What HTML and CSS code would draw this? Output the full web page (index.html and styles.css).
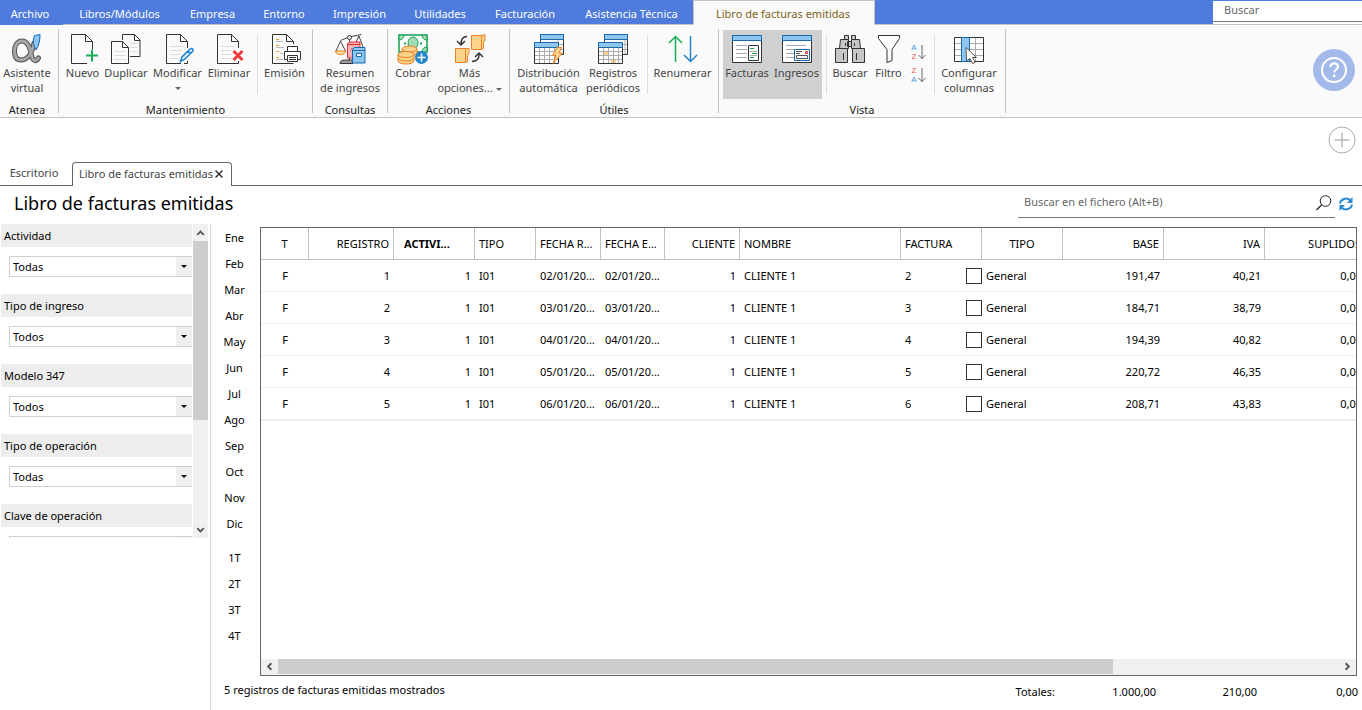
FILE: index.html
```html
<!DOCTYPE html>
<html lang="es">
<head>
<meta charset="utf-8">
<title>Libro de facturas emitidas</title>
<link rel="stylesheet" href="styles.css">
</head>
<body>
<header class="topbar">
  <nav class="menu">
    <button class="menu-item menu-file">Archivo</button>
    <button class="menu-item">Libros/Módulos</button>
    <button class="menu-item">Empresa</button>
    <button class="menu-item">Entorno</button>
    <button class="menu-item">Impresión</button>
    <button class="menu-item">Utilidades</button>
    <button class="menu-item">Facturación</button>
    <button class="menu-item">Asistencia Técnica</button>
    <button class="menu-item menu-active">Libro de facturas emitidas</button>
  </nav>
  <div class="top-search"><input type="text" placeholder="Buscar" aria-label="Buscar"></div>
</header>

<section class="ribbon">
  <div class="group g-atenea">
    <div class="tools">
      <button class="tool">
        <svg viewBox="0 0 32 32"><g fill="none" stroke-linecap="round"><path d="M23 10C21 21 16 27 10 27 5 27 3.500 23 3.500 18S6 8 11 8c6 0 8 7 9.500 14 1 5 3.500 8 7 3" stroke="#555" stroke-width="5"/><path d="M23 10C21 21 16 27 10 27 5 27 3.500 23 3.500 18S6 8 11 8c6 0 8 7 9.500 14 1 5 3.500 8 7 3" stroke="#a6a6a6" stroke-width="3"/></g><path d="M23.500 2.500l5.500-1c0 6-1 11-4 15.500-2-4-4-8-1.500-14.500z" fill="#8ec6ef" stroke="#1769b0"/></svg>
        <span>Asistente<br>virtual</span>
      </button>
    </div>
    <div class="group-name">Atenea</div>
  </div>

  <div class="group g-mant">
    <div class="tools">
      <button class="tool">
        <svg viewBox="0 0 32 32"><path d="M20 30.500H4.500v-29h14l7 7V16M18.500 1.500v7h7" fill="none" stroke="#333"/><path d="M25 16.500v12M19 22.500h12" stroke="#1aae54" stroke-width="2"/></svg>
        <span>Nuevo</span>
      </button>
      <button class="tool">
        <svg viewBox="0 0 32 32"><path d="M12.500 7V1.500h12l5.500 5.500v16.500H20M24.500 1.500v6H30M12.500 30.500h-11v-22h11l6 6v16h-6M12.500 8.500v6h6" fill="none" stroke="#333"/><path d="M20 10.500h8M20 14.500h8M20 18.500h8M4 18.500h12M4 22.500h12M4 26.500h12" stroke="#ddd"/></svg>
        <span>Duplicar</span>
      </button>
      <button class="tool">
        <svg viewBox="0 0 32 32"><path d="M19 30.500H4.500v-29h14l7 7V15M18.500 1.500v7h7M25.500 28v2.500H22" fill="none" stroke="#333"/><path d="M8 13.500h14M8 17.500h12M8 21.500h10M8 25.500h8" stroke="#ddd"/><path d="M18.500 28.500l1.500-4.500 8-8c2-1.500 4 .5 2.500 2.500l-8 8zM26 18l2.500 2.500" fill="#d9edfb" stroke="#2181cc" stroke-width="1.500"/></svg>
        <span>Modificar</span><i class="caret caret-below"></i>
      </button>
      <button class="tool">
        <svg viewBox="0 0 32 32"><path d="M24 30.500H4.500v-29h14l7 7V15M18.500 1.500v7h7M25.500 28v2.500H24" fill="none" stroke="#333"/><path d="M8 13.500h14M8 17.500h10M8 21.500h10M8 25.500h10" stroke="#ddd"/><path d="M20.500 18l9 9M29.500 18l-9 9" stroke="#ef3b3b" stroke-width="3"/></svg>
        <span>Eliminar</span>
      </button>
      <i class="sep"></i>
      <button class="tool">
        <svg viewBox="0 0 32 32"><path d="M24.500 30.500h-21v-29h14l7 7V11M17.500 1.500v7h7" fill="none" stroke="#333"/><path d="M7 6.500h3M7 12.500h3M7 18.500h3M7 24.500h3" stroke="#f0a020"/><path d="M7 8.500h7M7 14.500h8M11 20.500h3M7 26.500h7" stroke="#bbb"/><path d="M18.500 18.500v-5h10v5M18.500 26.500h-3v-8h16v8h-3M18.500 22.500h10v6h-10zM20 24.500h7M20 26.500h7" fill="#fff" stroke="#333"/></svg>
        <span>Emisión</span>
      </button>
    </div>
    <div class="group-name">Mantenimiento</div>
  </div>

  <div class="group g-cons">
    <div class="tools">
      <button class="tool">
        <svg viewBox="0 0 32 32"><path d="M6.500 7.500L15 4l12.500-2.500M15.500 4v23M6.500 8L2 18M6.500 8l5 10M25 3l4 11M25 3l-3 6" fill="none" stroke="#444"/><circle cx="15.500" cy="4.500" r="2" fill="#fff" stroke="#333"/><path d="M1.500 18h10c-.5 5-9.500 5-10 0z" fill="#fbd99b" stroke="#e8822a"/><path d="M6 30.500c0-3 3-3.500 7-3.500h6v3.500z" fill="#9c9c9c" stroke="#333"/><path d="M13.500 10.500l2-1.500h10.500v16H13.500z" fill="#f6b3b6" stroke="#e22e36"/><path d="M13.500 11.500H26M17 16h5" stroke="#e22e36"/><path d="M18.500 16.500l2-2h10.500v15.500H18.500z" fill="#8ec6ef" stroke="#1769b0"/><path d="M18.500 17.500H31M22.500 20.500h5v3h-5z" fill="#fff" stroke="#1769b0"/></svg>
        <span>Resumen<br>de ingresos</span>
      </button>
    </div>
    <div class="group-name">Consultas</div>
  </div>

  <div class="group g-acc">
    <div class="tools">
      <button class="tool">
        <svg viewBox="0 0 32 32"><path d="M2 2h28v17H2z" fill="#fff" stroke="#11a050" stroke-width="1.500"/><path d="M2 2h5c0 3-2 5-5 5zM30 2h-5c0 3 2 5 5 5zM30 19h-5c0-3 2-5 5-5z" fill="#a3dcb4" stroke="#11a050"/><ellipse cx="16" cy="10" rx="5" ry="6" fill="#a3dcb4" stroke="#11a050"/><path d="M7 9.500h2v2H7zM23 9.500h2v2h-2z" fill="#11a050"/><g fill="#fbd38a" stroke="#e8822a"><path d="M5 16v4c1 4 14 4 15 0v-4z"/><ellipse cx="12.500" cy="16" rx="7.500" ry="3"/><path d="M1 21v7c1 4 15 4 16 0v-7z"/><ellipse cx="9" cy="21.500" rx="8" ry="3"/><path d="M1 25c1 4 15 4 16 0" fill="none"/></g><circle cx="24.500" cy="24.500" r="6.500" fill="#2485cc"/><path d="M24.500 20.500v8M20.500 24.500h8" stroke="#fff" stroke-width="1.500"/></svg>
        <span>Cobrar</span>
      </button>
      <button class="tool">
        <svg viewBox="0 0 32 32"><g fill="#fbd38a" stroke="#e8822a"><path d="M17.500 2.500h10v14h-10zM27.500 2.500l3.500-1v6l-1.500 2v6l-2 1zM1.500 15.500h10v14h-10zM11.500 15.500h3.500v5l-1.500 2v6l-2 1z"/></g><path d="M13 3.500c-4 0-6 3-6 8M3 8l4 4 4-4M18 28.500c5 0 7-2 7-7M21 24l4-4 4 4" fill="none" stroke="#333" stroke-width="1.500"/></svg>
        <span>Más<br>opciones... <i class="caret caret-inline"></i></span>
      </button>
    </div>
    <div class="group-name">Acciones</div>
  </div>

  <div class="group g-util">
    <div class="tools">
      <button class="tool">
        <svg viewBox="0 0 32 32"><path d="M7.500 1.500h23v20h-23z" fill="#fff" stroke="#333"/><path d="M25 6v15M8 11.500h22M8 16.500h22" stroke="#aaa"/><path d="M7.500 1.500h23v5h-23z" fill="#8ec6ef" stroke="#1769b0"/><path d="M1.500 9.500h24v21h-24z" fill="#fff" stroke="#333"/><path d="M2 18.500h23M2 22.500h23M2 26.500h23M6.500 15v15M11.500 15v15M16.500 15v15M21.500 15v15" stroke="#aaa"/><path d="M1.500 9.500h24v5h-24z" fill="#8ec6ef" stroke="#1769b0"/><path d="M24 14.500h4.500L26 20h3.500L20 30.500l3-8h-3.500z" fill="#fbd38a" stroke="#e8822a"/></svg>
        <span>Distribución<br>automática</span>
      </button>
      <button class="tool">
        <svg viewBox="0 0 32 32"><path d="M7.500 1.500h23v20h-23z" fill="#fff" stroke="#333"/><path d="M28 6v15M8 11.500h22M8 16.500h22" stroke="#aaa"/><path d="M7.500 1.500h23v5h-23z" fill="#8ec6ef" stroke="#1769b0"/><path d="M1.500 9.500h24v21h-24z" fill="#fff" stroke="#333"/><path d="M7 19h5v3H7zM14 27h5v3h-5z" fill="#fbd38a"/><path d="M2 18.500h23M2 22.500h23M2 26.500h23M6.500 15v15M11.500 15v15M16.500 15v15M21.500 15v15" stroke="#aaa"/><path d="M1.500 9.500h24v5h-24z" fill="#8ec6ef" stroke="#1769b0"/></svg>
        <span>Registros<br>periódicos</span>
      </button>
      <i class="sep"></i>
      <button class="tool">
        <svg viewBox="0 0 32 32"><path d="M8.500 29V3.500M2 10l6.500-6.500L15 10" fill="none" stroke="#1aae54" stroke-width="1.500"/><path d="M23.500 3v25.500M17 22l6.500 6.500L30 22" fill="none" stroke="#2485cc" stroke-width="1.500"/></svg>
        <span>Renumerar</span>
      </button>
    </div>
    <div class="group-name">Útiles</div>
  </div>

  <div class="group g-vista">
    <div class="tools">
      <button class="tool pressed" aria-pressed="true">
        <svg viewBox="0 0 32 32"><path d="M1.500 2.500h29v27h-29z" fill="#fff" stroke="#333"/><path d="M1.500 2.500h29v5h-29z" fill="#8ec6ef" stroke="#1769b0"/><path d="M5 12.500h11M5 16.500h11M5 20.500h11M5 24.500h11" stroke="#aaa"/><path d="M17.500 12.500h10v15h-10z" fill="#fff" stroke="#333"/><path d="M19 15.500h4M21 20.500h5M19 24.500h4" stroke="#11a050"/><path d="M19 18.500h7M19 22.500h7" stroke="#aaa"/></svg>
        <span>Facturas</span>
      </button>
      <button class="tool pressed" aria-pressed="true">
        <svg viewBox="0 0 32 32"><path d="M1.500 2.500h29v27h-29z" fill="#fff" stroke="#333"/><path d="M1.500 2.500h29v5h-29z" fill="#8ec6ef" stroke="#1769b0"/><path d="M5 12.500h20M5 16.500h8M5 20.500h8M5 24.500h8" stroke="#aaa"/><path d="M13.500 16.500h15v11h-15z" fill="#fff" stroke="#1769b0"/><path d="M15 18.500h6M15 20.500h4M15.500 22.500h11v3h-11z" fill="none" stroke="#555"/><path d="M24.500 18.500h2v2h-2z" fill="none" stroke="#e22e36"/></svg>
        <span>Ingresos</span>
      </button>
      <i class="sep"></i>
      <button class="tool">
        <svg viewBox="0 0 32 32"><g fill="#c9c7c5" stroke="#333"><path d="M10.500 2.500h4v4h-4zM17.500 2.500h4v4h-4zM13.500 8.500h4v5h-4zM6.500 6.500h8v9h-9zM17.500 6.500h8l1 9h-9zM1.500 15.500h12v14h-12zM18.500 15.500h12v14h-12z"/><path d="M11.500 10v3M20.500 10v3M9.500 20v7M22.500 20v7"/></g></svg>
        <span>Buscar</span>
      </button>
      <button class="tool">
        <svg viewBox="0 0 32 32"><path d="M5.500 2.500h21v3L19 16.500v11l-5 2v-13L5.500 5.500z" fill="#fff" stroke="#333"/></svg>
        <span>Filtro</span>
      </button>
      <div class="sorts">
        <button class="sort" aria-label="Orden ascendente"><span class="letters"><b class="a">A</b><b class="z">Z</b></span><svg viewBox="0 0 8 16"><path d="M4 1v14M0.500 11L4 14.500 7.500 11" fill="none" stroke="#666"/></svg></button>
        <button class="sort" aria-label="Orden descendente"><span class="letters"><b class="z">Z</b><b class="a">A</b></span><svg viewBox="0 0 8 16"><path d="M4 1v14M0.500 11L4 14.500 7.500 11" fill="none" stroke="#666"/></svg></button>
      </div>
      <i class="sep"></i>
      <button class="tool">
        <svg viewBox="0 0 32 32"><path d="M1.500 4.500h29v24h-29z" fill="#fff" stroke="#333"/><path d="M2 10.500h28M2 16.500h28M2 22.500h28M22.500 5v23" stroke="#aaa"/><path d="M8.500 4.500h8v24h-8z" fill="#8ec6ef" stroke="#1769b0"/><path d="M13 14.500l10.500 10h-4l2.500 5-2.500 1-2.500-5-3.500 2.500z" fill="#fff" stroke="#555"/></svg>
        <span>Configurar<br>columnas</span>
      </button>
    </div>
    <div class="group-name">Vista</div>
  </div>
  <button class="help" aria-label="Ayuda">
    <svg viewBox="0 0 42 42"><circle cx="21" cy="21" r="21" fill="#a3b9ea"/><circle cx="21" cy="21" r="12" fill="none" stroke="#fff" stroke-width="2"/><path d="M17.500 18c0-5 7.500-4.500 7.500-.5 0 3-3.800 3-3.800 6" fill="none" stroke="#fff" stroke-width="2.200"/><circle cx="21.200" cy="26.800" r="1.400" fill="#fff"/></svg>
  </button>
</section>

<div class="addbar">
  <button class="add" aria-label="Añadir"><svg viewBox="0 0 28 28"><circle cx="14" cy="14" r="13" fill="none" stroke="#aaa"/><path d="M14 6.500v15M6.500 14h15" stroke="#999"/></svg></button>
</div>

<div class="doctabs">
  <button class="doctab">Escritorio</button>
  <button class="doctab current">Libro de facturas emitidas<svg viewBox="0 0 8 8"><path d="M.5.500l7 7M7.500.500l-7 7" stroke="#333" stroke-width="1.500"/></svg></button>
  <div class="doctabs-rest"></div>
</div>

<div class="titlebar">
  <h1>Libro de facturas emitidas</h1>
  <div class="file-search">
    <input type="text" placeholder="Buscar en el fichero (Alt+B)" aria-label="Buscar en el fichero">
    <button aria-label="Buscar"><svg viewBox="0 0 16 16"><circle cx="9.500" cy="6" r="5.300" fill="none" stroke="#222"/><path d="M5.500 10L.5 15" stroke="#222" stroke-width="1.200"/></svg></button>
  </div>
  <button class="refresh" aria-label="Actualizar"><svg viewBox="0 0 16 16"><path d="M2 7.500C2.500 3 9 .8 12.500 4.500M14 8.500c-.5 4.500-7 6.700-10.500 3" fill="none" stroke="#2a8ad4" stroke-width="2"/><path d="M14.500 1v6H9zM1.500 15V9H7z" fill="#2a8ad4"/></svg></button>
</div>

<main class="main">
  <aside class="side">
    <div class="filters">
      <div class="filter"><label for="f1">Actividad</label><div class="combo"><select id="f1"><option>Todas</option></select></div></div>
      <div class="filter"><label for="f2">Tipo de ingreso</label><div class="combo"><select id="f2"><option>Todos</option></select></div></div>
      <div class="filter"><label for="f3">Modelo 347</label><div class="combo"><select id="f3"><option>Todos</option></select></div></div>
      <div class="filter"><label for="f4">Tipo de operación</label><div class="combo"><select id="f4"><option>Todas</option></select></div></div>
      <div class="filter"><label for="f5">Clave de operación</label><div class="combo"><select id="f5"><option></option></select></div></div>
    </div>
    <div class="vscroll">
      <svg viewBox="0 0 16 16"><path d="M4.500 10.500L8 7l3.500 3.500" fill="none" stroke="#555" stroke-width="2"/></svg>
      <div class="vthumb"></div>
      <svg class="down" viewBox="0 0 16 16"><path d="M4.500 6.500L8 10l3.500-3.500" fill="none" stroke="#555" stroke-width="2"/></svg>
    </div>
  </aside>

  <nav class="periods">
    <button>Ene</button><button>Feb</button><button>Mar</button><button>Abr</button><button>May</button><button>Jun</button><button>Jul</button><button>Ago</button><button>Sep</button><button>Oct</button><button>Nov</button><button>Dic</button>
    <button class="quarter">1T</button><button>2T</button><button>3T</button><button>4T</button>
  </nav>

  <section class="content">
    <div class="gridbox">
      <div class="scroller">
        <table class="grid">
          <colgroup><col class="c48"><col class="c85"><col class="c81"><col class="c61"><col class="c65"><col class="c64"><col class="c75"><col class="c161"><col class="c81"><col class="c81"><col class="c101"><col class="c101"><col class="c101"></colgroup>
          <thead><tr><th class="mid">T</th><th class="num">REGISTRO</th><th class="sorted">ACTIVI...</th><th>TIPO</th><th>FECHA R...</th><th>FECHA E...</th><th class="num">CLIENTE</th><th>NOMBRE</th><th>FACTURA</th><th class="mid">TIPO</th><th class="num">BASE</th><th class="num">IVA</th><th class="num">SUPLIDOS</th></tr></thead>
          <tbody>
            <tr><td class="mid">F</td><td class="num">1</td><td class="num">1</td><td>I01</td><td>02/01/20...</td><td>02/01/20...</td><td class="num">1</td><td>CLIENTE 1</td><td class="chk"><div><span>2</span><input type="checkbox" aria-label="Factura 2"></div></td><td>General</td><td class="num">191,47</td><td class="num">40,21</td><td class="num">0,00</td></tr>
            <tr><td class="mid">F</td><td class="num">2</td><td class="num">1</td><td>I01</td><td>03/01/20...</td><td>03/01/20...</td><td class="num">1</td><td>CLIENTE 1</td><td class="chk"><div><span>3</span><input type="checkbox" aria-label="Factura 3"></div></td><td>General</td><td class="num">184,71</td><td class="num">38,79</td><td class="num">0,00</td></tr>
            <tr><td class="mid">F</td><td class="num">3</td><td class="num">1</td><td>I01</td><td>04/01/20...</td><td>04/01/20...</td><td class="num">1</td><td>CLIENTE 1</td><td class="chk"><div><span>4</span><input type="checkbox" aria-label="Factura 4"></div></td><td>General</td><td class="num">194,39</td><td class="num">40,82</td><td class="num">0,00</td></tr>
            <tr><td class="mid">F</td><td class="num">4</td><td class="num">1</td><td>I01</td><td>05/01/20...</td><td>05/01/20...</td><td class="num">1</td><td>CLIENTE 1</td><td class="chk"><div><span>5</span><input type="checkbox" aria-label="Factura 5"></div></td><td>General</td><td class="num">220,72</td><td class="num">46,35</td><td class="num">0,00</td></tr>
            <tr><td class="mid">F</td><td class="num">5</td><td class="num">1</td><td>I01</td><td>06/01/20...</td><td>06/01/20...</td><td class="num">1</td><td>CLIENTE 1</td><td class="chk"><div><span>6</span><input type="checkbox" aria-label="Factura 6"></div></td><td>General</td><td class="num">208,71</td><td class="num">43,83</td><td class="num">0,00</td></tr>
          </tbody>
        </table>
      </div>
      <div class="hscroll">
        <svg viewBox="0 0 16 16"><path d="M10 4.500L6.500 8l3.500 3.500" fill="none" stroke="#555" stroke-width="2"/></svg>
        <div class="hthumb"></div>
        <div class="hrest"></div>
        <svg viewBox="0 0 16 16"><path d="M6 4.500L9.500 8 6 11.500" fill="none" stroke="#555" stroke-width="2"/></svg>
      </div>
    </div>
    <footer class="status">
      <span class="count">5 registros de facturas emitidas mostrados</span>
      <span class="total">Totales:</span><span class="total">1.000,00</span><span class="total">210,00</span><span class="total">0,00</span>
    </footer>
  </section>
</main>
</body>
</html>
```

FILE: styles.css
```css
* { box-sizing: border-box; }
html, body { height: 100%; }
body {
  margin: 0;
  display: flex;
  flex-direction: column;
  overflow: hidden;
  background: #fff;
  color: #000;
  font-family: "Noto Sans", "Open Sans", sans-serif;
  font-size: 11px;
  line-height: 15px;
}
button, input, select { font: inherit; color: inherit; margin: 0; padding: 0; border: 0; background: none; }
svg { display: block; flex: none; }

/* Menu bar */
.topbar { display: flex; justify-content: space-between; height: 25px; flex: none; background: #4e7bdc; border-bottom: 1px solid #c3c3c3; }
.menu { display: grid; grid-template-columns: 63px 113px 73px 70px 81px 80px 90px 123px 182px; height: 25px; }
.menu-item { color: #fff; white-space: nowrap; padding-top: 1px; }
.menu-file { background: #4e7bdc; padding-right: 3px; }
.menu-active { background: #fafafa; color: #7d6116; border: 1px solid #c3c3c3; border-bottom: 0; padding: 0 2px 0 0; }
.top-search { width: 149px; margin-top: 1px; background: #fff; }
.top-search input { width: 100%; height: 21px; padding: 0 11px 4px; border-bottom: 1px solid #777; }
.top-search input::placeholder, .file-search input::placeholder { color: #666; opacity: 1; }

/* Ribbon */
.ribbon { display: flex; height: 93px; flex: none; background: #fafafa; border-bottom: 1px solid #c3c3c3; padding: 4px 7px 4px 0; }
.group { border-right: 1px solid #c3c3c3; padding: 1px 4px 0; display: flex; flex-direction: column; flex: none; }
.tools { display: grid; height: 69px; margin-bottom: 3px; flex: none; }
.g-atenea { width: 59px; padding: 1px 4px 0 0; }
.g-mant { width: 254px; }
.g-mant .tools { grid-template-columns: 39px 48px 55px 48px 8px 47px; }
.g-cons { width: 75px; }
.g-acc { width: 122px; }
.g-acc .tools { grid-template-columns: 42px 71px; }
.g-util { width: 209px; }
.g-util .tools { grid-template-columns: 69px 60px 8px 63px; }
.g-vista { width: 287px; }
.g-vista .tools { grid-template-columns: 48px 51px 8px 40px 37px 23px 8px 62px; }
.tool { display: flex; flex-direction: column; align-items: center; padding-top: 3px; color: #444; white-space: nowrap; }
.tool svg { width: 32px; height: 32px; }
.tool span { text-align: center; }
.pressed { background: #d0d0d0; }
.sep { width: 1px; height: 59px; margin: 5px auto 0; background: #ddd; }
.caret { width: 0; height: 0; border: 3px solid transparent; border-top-color: #666; border-bottom: 0; }
.caret-below { margin-top: 7px; }
.caret-inline { display: inline-block; vertical-align: middle; }
.group-name { flex: none; margin-bottom: -4px; text-align: center; color: #222; }
.sorts { display: flex; flex-direction: column; align-items: center; gap: 5px; padding-top: 13px; }
.sort { display: flex; gap: 1px; align-items: center; height: 18px; }
.sort svg { width: 8px; height: 16px; }
.letters { display: flex; flex-direction: column; font-family: "Liberation Sans", sans-serif; font-size: 8px; line-height: 9px; }
.letters b { font-weight: 400; }
.a { color: #3d97dd; }
.z { color: #ee5558; }
.help { margin-left: auto; width: 42px; height: 42px; align-self: flex-start; margin-top: 20px; }

/* Tabs */
.addbar { display: flex; justify-content: flex-end; flex: none; height: 44px; padding: 8px 6px 0; }
.add, .add svg { width: 28px; height: 28px; }
.doctabs { display: flex; height: 24px; flex: none; }
.doctab { width: 72px; padding: 0 4px 2px 0; color: #444; border-bottom: 1px solid #666; white-space: nowrap; }
.doctab.current { display: flex; align-items: center; justify-content: center; gap: 2px; width: 160px; padding: 0 2px 2px 0; border: 1px solid #666; border-bottom: 0; border-radius: 4px 4px 0 0; }
.doctab svg { width: 8px; height: 8px; }
.doctabs-rest { flex: 1; border-bottom: 1px solid #666; }

.titlebar { display: flex; align-items: flex-start; height: 38px; flex: none; padding: 4px 8px 0 14px; }
h1 { flex: 1; margin: 0; font-size: 18px; line-height: 26px; font-weight: 400; }
.file-search { display: flex; align-items: center; width: 317px; height: 28px; padding: 0 3px 2px 6px; border-bottom: 1px solid #777; }
.file-search input { flex: 1; min-width: 0; height: 20px; padding-bottom: 2px; }
.file-search svg, .refresh svg { width: 16px; height: 16px; }
.refresh { margin: 6px 0 0 3px; }

/* Workspace */
.main { display: flex; flex: 1; min-height: 0; }
.side { display: flex; width: 211px; flex: none; padding-left: 1px; border-right: 1px solid #d9d9d9; align-items: flex-start; }
.filters { flex: 1; height: 314px; overflow: hidden; }
.filter { height: 70px; }
.filter label { display: block; height: 23px; padding: 4px 3px; background: #ededed; }
.combo { position: relative; margin: 9px 0 0 8px; }
.combo select { display: block; width: 100%; height: 21px; padding: 0 3px; appearance: none; border: 1px solid #d0d0d0; border-right: 0; background: linear-gradient(#efefef, #efefef) right / 16px 100% no-repeat; }
.combo::after { content: ""; position: absolute; right: 5px; top: 9px; border: 3px solid transparent; border-top-color: #000; border-bottom: 0; pointer-events: none; }
.vscroll { display: flex; flex-direction: column; width: 15px; height: 314px; margin: 0 2px 0 1px; background: #f0f0f0; }
.vscroll svg { width: 15px; height: 17px; }
.vthumb { height: 179px; background: #cdcdcd; }
.vscroll .down { margin-top: auto; }

.periods { display: flex; flex-direction: column; width: 49px; flex: none; padding: 1px 2px 0 0; }
.periods button { height: 26px; line-height: 26px; flex: none; }
.periods .quarter { margin-top: 8px; }

.content { display: flex; flex-direction: column; flex: 1; min-width: 0; padding-top: 3px; }
.gridbox { display: flex; flex-direction: column; flex: 1; min-height: 0; margin-right: 5px; border: 1px solid #666; }
.scroller { flex: 1; min-height: 0; overflow: hidden; }
.grid { table-layout: fixed; width: 1105px; border-collapse: separate; border-spacing: 0; border-bottom: 1px solid #ededed; }
.c48 { width: 48px; } .c61 { width: 61px; } .c64 { width: 64px; } .c65 { width: 65px; } .c75 { width: 75px; }
.c81 { width: 81px; } .c85 { width: 85px; } .c101 { width: 101px; } .c161 { width: 161px; }
.grid th, .grid td { height: 32px; padding: 0 4px; text-align: left; font-weight: 400; white-space: nowrap; overflow: hidden; }
.grid th { border-right: 1px solid #c0c0c0; border-bottom: 1px solid #c0c0c0; }
.grid td { border-bottom: 1px solid #ededed; }
.grid .num { text-align: right; }
.grid .mid { text-align: center; }
.grid .sorted { font-weight: 700; padding-left: 10px; }
.grid .chk { padding-right: 0; }
.chk div { display: flex; align-items: center; justify-content: space-between; }
.chk input { appearance: none; width: 16px; height: 16px; border: 1px solid #333; background: #fff; }
.hscroll { display: flex; height: 16px; flex: none; background: #f0f0f0; }
.hscroll svg { width: 17px; height: 15px; }
.hthumb { flex: 835; height: 15px; background: #cdcdcd; }
.hrest { flex: 226; }

.status { display: flex; align-items: center; height: 34px; flex: none; padding: 0 4px 3px 0; margin-left: -36px; }
.count { flex: 1; padding-bottom: 4px; }
.total { width: 101px; text-align: right; }
```
